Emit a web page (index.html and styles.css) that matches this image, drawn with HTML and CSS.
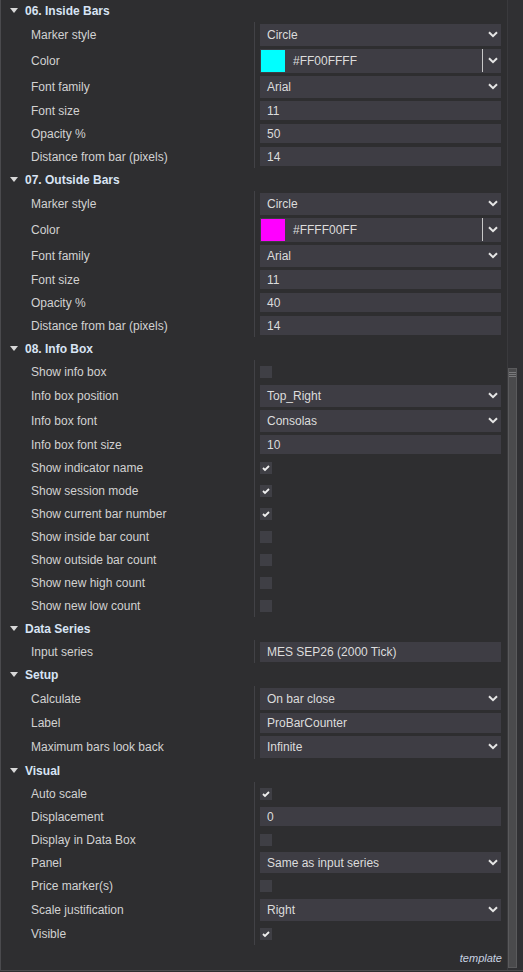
FILE: index.html
```html
<!DOCTYPE html>
<html lang="en">
<head>
    <meta charset="UTF-8">
    <meta name="viewport" content="width=device-width, initial-scale=1.0">
    <title>Properties</title>
    <link rel="stylesheet" href="styles.css">
</head>
<body>
    <div class="panel">
        <div class="content">
            <!-- 06. Inside Bars -->
            <div class="group first">
                <div class="group-head"><span class="caret"></span>06. Inside Bars</div>
                <div class="row drop"><div class="label">Marker style</div><div class="value"><div class="box select">Circle<svg class="chev" viewBox="0 0 10 7"><path d="M1 1.2 5 5.2 9 1.2"/></svg></div></div></div>
                <div class="row color"><div class="label">Color</div><div class="value"><div class="box picker"><span class="swatch cyan"></span><span class="hex">#FF00FFFF</span><span class="split"></span><svg class="chev" viewBox="0 0 10 7"><path d="M1 1.2 5 5.2 9 1.2"/></svg></div></div></div>
                <div class="row drop"><div class="label">Font family</div><div class="value"><div class="box select">Arial<svg class="chev" viewBox="0 0 10 7"><path d="M1 1.2 5 5.2 9 1.2"/></svg></div></div></div>
                <div class="row"><div class="label">Font size</div><div class="value"><div class="box">11</div></div></div>
                <div class="row"><div class="label">Opacity %</div><div class="value"><div class="box">50</div></div></div>
                <div class="row"><div class="label">Distance from bar (pixels)</div><div class="value"><div class="box">14</div></div></div>
            </div>

            <!-- 07. Outside Bars -->
            <div class="group">
                <div class="group-head"><span class="caret"></span>07. Outside Bars</div>
                <div class="row drop"><div class="label">Marker style</div><div class="value"><div class="box select">Circle<svg class="chev" viewBox="0 0 10 7"><path d="M1 1.2 5 5.2 9 1.2"/></svg></div></div></div>
                <div class="row color"><div class="label">Color</div><div class="value"><div class="box picker"><span class="swatch magenta"></span><span class="hex">#FFFF00FF</span><span class="split"></span><svg class="chev" viewBox="0 0 10 7"><path d="M1 1.2 5 5.2 9 1.2"/></svg></div></div></div>
                <div class="row drop"><div class="label">Font family</div><div class="value"><div class="box select">Arial<svg class="chev" viewBox="0 0 10 7"><path d="M1 1.2 5 5.2 9 1.2"/></svg></div></div></div>
                <div class="row"><div class="label">Font size</div><div class="value"><div class="box">11</div></div></div>
                <div class="row"><div class="label">Opacity %</div><div class="value"><div class="box">40</div></div></div>
                <div class="row"><div class="label">Distance from bar (pixels)</div><div class="value"><div class="box">14</div></div></div>
            </div>

            <!-- 08. Info Box -->
            <div class="group">
                <div class="group-head"><span class="caret"></span>08. Info Box</div>
                <div class="row"><div class="label">Show info box</div><div class="value"><span class="check"></span></div></div>
                <div class="row drop"><div class="label">Info box position</div><div class="value"><div class="box select">Top_Right<svg class="chev" viewBox="0 0 10 7"><path d="M1 1.2 5 5.2 9 1.2"/></svg></div></div></div>
                <div class="row drop"><div class="label">Info box font</div><div class="value"><div class="box select">Consolas<svg class="chev" viewBox="0 0 10 7"><path d="M1 1.2 5 5.2 9 1.2"/></svg></div></div></div>
                <div class="row"><div class="label">Info box font size</div><div class="value"><div class="box">10</div></div></div>
                <div class="row"><div class="label">Show indicator name</div><div class="value"><span class="check on"><svg viewBox="0 0 12 12"><path d="M3 6 5 8 9 4"/></svg></span></div></div>
                <div class="row"><div class="label">Show session mode</div><div class="value"><span class="check on"><svg viewBox="0 0 12 12"><path d="M3 6 5 8 9 4"/></svg></span></div></div>
                <div class="row"><div class="label">Show current bar number</div><div class="value"><span class="check on"><svg viewBox="0 0 12 12"><path d="M3 6 5 8 9 4"/></svg></span></div></div>
                <div class="row"><div class="label">Show inside bar count</div><div class="value"><span class="check"></span></div></div>
                <div class="row"><div class="label">Show outside bar count</div><div class="value"><span class="check"></span></div></div>
                <div class="row"><div class="label">Show new high count</div><div class="value"><span class="check"></span></div></div>
                <div class="row"><div class="label">Show new low count</div><div class="value"><span class="check"></span></div></div>
            </div>

            <!-- Data Series -->
            <div class="group">
                <div class="group-head"><span class="caret"></span>Data Series</div>
                <div class="row"><div class="label">Input series</div><div class="value"><div class="box tall">MES SEP26 (2000 Tick)</div></div></div>
            </div>

            <!-- Setup -->
            <div class="group">
                <div class="group-head"><span class="caret"></span>Setup</div>
                <div class="row drop"><div class="label">Calculate</div><div class="value"><div class="box select">On bar close<svg class="chev" viewBox="0 0 10 7"><path d="M1 1.2 5 5.2 9 1.2"/></svg></div></div></div>
                <div class="row"><div class="label">Label</div><div class="value"><div class="box tall">ProBarCounter</div></div></div>
                <div class="row drop"><div class="label">Maximum bars look back</div><div class="value"><div class="box select">Infinite<svg class="chev" viewBox="0 0 10 7"><path d="M1 1.2 5 5.2 9 1.2"/></svg></div></div></div>
            </div>

            <!-- Visual -->
            <div class="group">
                <div class="group-head"><span class="caret"></span>Visual</div>
                <div class="row"><div class="label">Auto scale</div><div class="value"><span class="check on"><svg viewBox="0 0 12 12"><path d="M3 6 5 8 9 4"/></svg></span></div></div>
                <div class="row"><div class="label">Displacement</div><div class="value"><div class="box">0</div></div></div>
                <div class="row"><div class="label">Display in Data Box</div><div class="value"><span class="check"></span></div></div>
                <div class="row"><div class="label">Panel</div><div class="value"><div class="box select short">Same as input series<svg class="chev" viewBox="0 0 10 7"><path d="M1 1.2 5 5.2 9 1.2"/></svg></div></div></div>
                <div class="row"><div class="label">Price marker(s)</div><div class="value"><span class="check"></span></div></div>
                <div class="row drop"><div class="label">Scale justification</div><div class="value"><div class="box select">Right<svg class="chev" viewBox="0 0 10 7"><path d="M1 1.2 5 5.2 9 1.2"/></svg></div></div></div>
                <div class="row"><div class="label">Visible</div><div class="value"><span class="check on"><svg viewBox="0 0 12 12"><path d="M3 6 5 8 9 4"/></svg></span></div></div>
            </div>

            <div class="footer">template</div>
        </div>

        <!-- Barra de desplazamiento -->
        <div class="scrollbar">
            <div class="thumb"><span></span><span></span><span></span></div>
        </div>
    </div>
</body>
</html>
```

FILE: styles.css
```css
body {
    margin: 0;
    background-color: #2e2e30;
    font-family: "Liberation Sans", Arial, sans-serif;
    font-size: 12px;
    color: #d2d2d2;
    overflow: hidden;
}

.panel {
    display: flex;
    height: 971px;
    border-left: 1px solid #4a4a4d;
    border-bottom: 1px solid #4a4a4d;
    box-sizing: border-box;
}

.content {
    flex: 1;
    display: flex;
    flex-direction: column;
    margin-top: -1px;
}

/* Cabecera de grupo */
.group-head {
    height: 23px;
    display: flex;
    align-items: center;
    padding-left: 9px;
    font-weight: bold;
    color: #d8e4f4;
}

.caret {
    width: 0;
    height: 0;
    border-left: 4px solid transparent;
    border-right: 4px solid transparent;
    border-top: 5px solid #d8d8d8;
    margin-right: 7px;
}

/* Filas */
.row {
    display: flex;
    height: 23px;
}

.row.drop {
    height: 25px;
}

.row.color {
    height: 27px;
}

.label {
    width: 223px;
    padding-left: 30px;
    display: flex;
    align-items: center;
    white-space: nowrap;
}

.value {
    flex: 1;
    display: flex;
    align-items: center;
    border-left: 1px solid #424246;
    padding: 0 6px 0 5px;
}

.box {
    flex: 1;
    height: 19px;
    background-color: #3e3d44;
    display: flex;
    align-items: center;
    padding-left: 7px;
    color: #dcdcdc;
}

.box.tall {
    height: 20px;
}

.box.select {
    height: 22px;
    justify-content: space-between;
    padding-right: 3px;
}

.box.select.short {
    height: 21px;
}

.chev {
    width: 10px;
    height: 7px;
    fill: none;
    stroke: #e6e6e6;
    stroke-width: 2;
}

/* Selector de color */
.box.picker {
    height: 24px;
    padding-left: 1px;
    padding-right: 3px;
}

.swatch {
    width: 24px;
    height: 22px;
}

.swatch.cyan {
    background-color: #00ffff;
}

.swatch.magenta {
    background-color: #ff00ff;
}

.hex {
    flex: 1;
    padding-left: 8px;
}

.split {
    width: 1px;
    height: 23px;
    background-color: #c8c8c8;
    margin-right: 5px;
}

/* Casillas */
.check {
    width: 12px;
    height: 12px;
    background-color: #3f3f45;
    display: flex;
}

.check svg {
    width: 12px;
    height: 12px;
    fill: none;
    stroke: #f0f0f0;
    stroke-width: 1.8;
}

.footer {
    margin-top: auto;
    text-align: right;
    padding: 0 5px 6px 0;
    font-style: italic;
    font-size: 11px;
    color: #c8d2e0;
}

/* Barra de desplazamiento */
.scrollbar {
    width: 15px;
    border-left: 1px solid #3a3a3d;
    background-color: #303033;
    position: relative;
}

.thumb {
    margin-top: 368px;
    width: 9px;
    height: 600px;
    background-color: #4a4a4c;
    border: 1px solid #5a5a5c;
    box-sizing: border-box;
    display: flex;
    flex-direction: column;
    align-items: center;
    gap: 1px;
    padding-top: 3px;
}

.thumb span {
    width: 7px;
    height: 1px;
    background-color: #7a7a7c;
}
```
